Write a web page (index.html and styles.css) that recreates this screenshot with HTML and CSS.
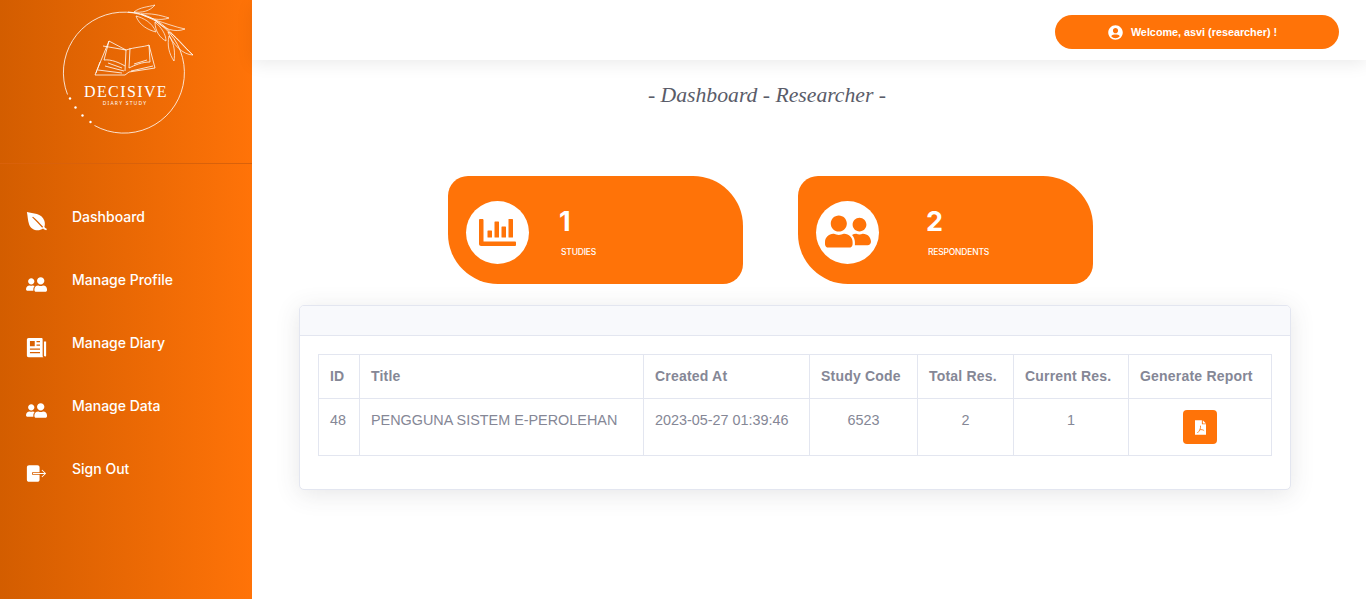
FILE: index.html
```html
<!DOCTYPE html>
<html lang="en">
<head>
    <meta charset="UTF-8">
    <title>Decisive - Dashboard</title>
    <link rel="stylesheet" href="styles.css">
</head>
<body>
    <svg class="icon-defs" width="0" height="0">
        <symbol id="i-friends" viewBox="0 0 640 512"><path d="M192 256c61.9 0 112-50.1 112-112S253.9 32 192 32 80 82.1 80 144s50.1 112 112 112zm76.8 32h-8.3c-20.8 10-43.9 16-68.5 16s-47.6-6-68.5-16h-8.3C51.6 288 0 339.6 0 403.2V432c0 26.5 21.5 48 48 48h288c26.5 0 48-21.5 48-48v-28.8c0-63.6-51.6-115.2-115.2-115.2zM480 256c53 0 96-43 96-96s-43-96-96-96-96 43-96 96 43 96 96 96zm48 32h-3.8c-13.9 4.8-28.6 8-44.2 8s-30.3-3.2-44.2-8H432c-20.4 0-39.2 5.9-55.7 15.4 24.4 26.3 39.7 61.2 39.7 99.8v38.4c0 2.2-.5 4.3-.6 6.4H592c26.5 0 48-21.5 48-48 0-61.9-50.1-112-112-112z"/></symbol>
    </svg>

    <!-- Sidebar -->
    <aside class="sidebar">
        <div class="brand">
            <svg class="logo" viewBox="0 0 252 163">
                <g fill="none" stroke="#fff">
                    <path d="M67.500 94.500A60.500 60.500 0 1 1 94.500 125.500" stroke-width=".8"/>
                    <path d="M128 12C150 13 165 25 174 36C182 44 187 50 193 55" stroke-width=".8"/>
                    <path d="M134 12C140 7 148 7 155 5C150 11 142 13 134 12ZM141 14C150 13 160 15 169 18C160 21 149 19 141 14ZM155 20C165 23 175 27 185 29C175 33 163 29 155 20ZM168 32C175 34 184 47 193 55C183 55 172 44 168 32ZM136 16C143 18 152 22 156 32C148 30 139 25 136 16ZM155 22C161 27 166 34 166 41C160 38 155 31 155 22ZM169 36C175 44 175 54 174 61C169 54 167 45 169 36Z" stroke-width=".7"/>
                    <g stroke-width=".8">
                        <path d="M109 41L126 50C135 47 144 47 149 45L155 68L129 72L125 75L95 75Z"/>
                        <path d="M126 50L125 71M130 48L129 68M109 41L104 60C111 59 120 63 125 66M149 45L150 62C142 62 135 65 129 68M103 46L126 50M100 62L96 73M105 66L124 71M131 71L153 66M98 70L122 73M108 63L122 68M134 64L147 60"/>
                    </g>
                </g>
                <g fill="#fff">
                    <circle cx="70" cy="98.500" r="1.200"/>
                    <circle cx="75.500" cy="107.500" r="1.200"/>
                    <circle cx="82.500" cy="115.500" r="1.200"/>
                    <circle cx="90.500" cy="122" r="1.200"/>
                    <text class="logo-name" x="126" y="97" text-anchor="middle">DECISIVE</text>
                    <text class="logo-sub" x="125" y="105" text-anchor="middle">DIARY STUDY</text>
                </g>
            </svg>
        </div>
        <nav class="menu">
            <a class="menu-item" href="#">
                <svg class="menu-icon" viewBox="0 0 24 24"><path fill-rule="evenodd" d="M1 1C8 3 18 2 21 11C22 14 21.500 17 21 18C21.500 19 22.500 20 24 20.500L23 22C21.500 21.500 20 20.500 19.500 20C14 24 6 22 3.500 15C2 11 2 5 1 1ZM7 7L8 6.500C12 10 16 14 19.500 18L18.500 19C15 15 11 11 7 7Z"/></svg>
                <span>Dashboard</span>
            </a>
            <a class="menu-item" href="#">
                <svg class="menu-icon mirror"><use href="#i-friends"/></svg>
                <span>Manage Profile</span>
            </a>
            <a class="menu-item" href="#">
                <svg class="menu-icon" viewBox="0 0 24 24"><path fill-rule="evenodd" d="M3 1H17.500C18.500 1 19 1.500 19 2.500V21C19 22 19.500 23 20 23H3C1.800 23 1 22.200 1 21V3C1 1.800 1.800 1 3 1ZM4.500 4.500V10.500H10V4.500ZM12 4.500V6H16V4.500ZM12 8.500V10H16V8.500ZM4.500 13V14.500H16V13ZM4.500 17V18.500H16V17Z"/><path d="M20.500 5H23V21C23 22.500 21.500 22.500 20.500 21.500Z"/></svg>
                <span>Manage Diary</span>
            </a>
            <a class="menu-item" href="#">
                <svg class="menu-icon mirror"><use href="#i-friends"/></svg>
                <span>Manage Data</span>
            </a>
            <a class="menu-item" href="#">
                <svg class="menu-icon" viewBox="0 0 24 24"><path d="M3.500 2.500H13C14.500 2.500 15.500 3.500 15.500 5V10.500H7V13.500H15.500V19C15.500 20.500 14.500 21.500 13 21.500H3.500C2 21.500 1 20.500 1 19V5C1 3.500 2 2.500 3.500 2.500Z"/><path d="M8 11.500H21L17.800 8.300L18.500 7.600L23 12L18.500 16.400L17.800 15.700L21 12.500H8Z"/></svg>
                <span>Sign Out</span>
            </a>
        </nav>
    </aside>

    <main class="content">
        <header class="topbar">
            <div class="welcome">
                <svg class="welcome-icon" viewBox="0 0 496 512"><path d="M248 8C111 8 0 119 0 256s111 248 248 248 248-111 248-248S385 8 248 8zm0 96c48.600 0 88 39.400 88 88s-39.400 88-88 88-88-39.400-88-88 39.400-88 88-88zm0 344c-58.700 0-111.300-26.600-146.500-68.200 18.800-35.400 55.600-59.800 98.500-59.800 2.400 0 4.800.4 7.100 1.100 13 4.200 26.600 6.900 40.900 6.900 14.300 0 28-2.700 40.900-6.900 2.300-.7 4.700-1.100 7.100-1.100 42.900 0 79.700 24.400 98.500 59.800C359.300 421.400 306.700 448 248 448z"/></svg>
                <span>Welcome, asvi (researcher) !</span>
            </div>
        </header>

        <h1 class="page-title">- Dashboard - Researcher -</h1>

        <!-- Kartu ringkasan -->
        <section class="stats">
            <div class="stat-card">
                <div class="stat-circle">
                    <svg class="stat-chart" viewBox="0 0 37 27"><path d="M1 0H3.500C4 0 4.500 .5 4.500 1V22.500H36C36.500 22.500 37 23 37 23.500V26C37 26.500 36.500 27 36 27H2C1 27 0 26 0 25V1C0 .5 .5 0 1 0Z"/><rect x="8.500" y="11.500" width="4.500" height="7" rx=".6"/><rect x="15.500" y="2.500" width="4.500" height="16" rx=".6"/><rect x="22.500" y="7.500" width="4.500" height="11" rx=".6"/><rect x="29.500" y="0" width="4.500" height="18.500" rx=".6"/></svg>
                </div>
                <div class="stat-text stat-text-first">
                    <div class="stat-number">1</div>
                    <div class="stat-label">Studies</div>
                </div>
            </div>
            <div class="stat-card">
                <div class="stat-circle">
                    <svg class="stat-people"><use href="#i-friends"/></svg>
                </div>
                <div class="stat-text stat-text-second">
                    <div class="stat-number">2</div>
                    <div class="stat-label">Respondents</div>
                </div>
            </div>
        </section>

        <!-- Tabel studi -->
        <section class="panel">
            <div class="panel-head"></div>
            <div class="panel-body">
                <table class="study-table">
                    <colgroup>
                        <col class="col-id"><col class="col-title"><col class="col-created"><col class="col-code"><col class="col-total"><col class="col-current"><col class="col-report">
                    </colgroup>
                    <thead>
                        <tr>
                            <th>ID</th>
                            <th>Title</th>
                            <th>Created At</th>
                            <th>Study Code</th>
                            <th>Total Res.</th>
                            <th>Current Res.</th>
                            <th>Generate Report</th>
                        </tr>
                    </thead>
                    <tbody>
                        <tr>
                            <td>48</td>
                            <td>PENGGUNA SISTEM E-PEROLEHAN</td>
                            <td>2023-05-27 01:39:46</td>
                            <td class="center">6523</td>
                            <td class="center">2</td>
                            <td class="center">1</td>
                            <td class="center">
                                <a class="pdf-btn" href="#">
                                    <svg viewBox="0 0 12 16"><path fill="#fff" d="M0 0H7.500V4.500H12V16H0Z"/><path fill="#fff" d="M8.500 0L12 3.500H8.500Z"/><path fill="none" stroke="#ff7308" stroke-width=".9" d="M6 6C6.500 9 5 12 2.500 14M5 10.500C7 10 9 10.500 10 11.500"/></svg>
                                </a>
                            </td>
                        </tr>
                    </tbody>
                </table>
            </div>
        </section>
    </main>
</body>
</html>
```

FILE: styles.css
```css
* { box-sizing: border-box; }
body { margin: 0; height: 599px; overflow: hidden; display: flex; background: #fff; font-family: "Liberation Sans", Arial, sans-serif; color: #858796; }
.icon-defs { position: absolute; }

/* Sidebar */
.sidebar { width: 252px; flex-shrink: 0; background: linear-gradient(90deg, #d35d00 0%, #ff7308 100%); }
.brand { height: 164px; border-bottom: 1px solid #d9610a; }
.logo { display: block; width: 252px; height: 163px; }
.logo-name { font-family: "Liberation Serif", serif; font-size: 16px; letter-spacing: 1.4px; }
.logo-sub { font-family: "Noto Sans", sans-serif; font-size: 5px; letter-spacing: 1.2px; }
.menu { padding-top: 22px; display: flex; flex-direction: column; }
.menu-item { height: 63px; display: flex; align-items: flex-start; padding: 0 0 0 26px; color: #fff; text-decoration: none; font-family: "Inter", sans-serif; font-size: 14px; line-height: 18px; font-weight: 500; }
.menu-item span { margin-left: 25px; margin-top: 22px; }
.menu-icon { width: 21px; height: 21px; margin-top: 25px; fill: #fff; flex-shrink: 0; }
.mirror { transform: scaleX(-1); }

/* Main */
.content { flex: 1; min-width: 0; }
.topbar { height: 60px; background: #fff; box-shadow: 0 4px 16px rgba(0, 0, 0, .08); display: flex; justify-content: flex-end; align-items: flex-start; padding: 15px 27px 0 0; position: relative; }
.welcome { width: 284px; height: 34px; border-radius: 17px; background: #ff7308; color: #fff; display: flex; align-items: center; justify-content: center; gap: 8px; font-size: 10.800px; font-weight: 700; padding-right: 9px; }
.welcome-icon { width: 15px; height: 15px; fill: #fff; }
.page-title { margin: 20px 0 0; height: 96px; text-align: center; font-family: "Liberation Serif", serif; font-style: italic; font-weight: 400; font-size: 21.700px; line-height: 30px; color: #5a5c69; padding-right: 84px; }

.stats { display: flex; gap: 55px; padding-left: 196px; }
.stat-card { width: 295px; height: 108px; background: #ff7308; border-radius: 20px 50px 20px 50px; color: #fff; display: flex; align-items: flex-start; padding: 25px 0 0 18px; }
.stat-circle { width: 63px; height: 63px; border-radius: 50%; background: #fff; display: flex; align-items: center; justify-content: center; flex-shrink: 0; }
.stat-chart { width: 37px; height: 27px; fill: #ff7308; }
.stat-people { width: 46px; height: 37px; fill: #ff7308; margin-top: -2px; }
.stat-text { font-family: "Inter", sans-serif; }
.stat-text-first { margin-left: 30px; }
.stat-text-second { margin-left: 47px; }
.stat-number { font-size: 27px; line-height: 32px; font-weight: 700; margin-top: 5px; }
.stat-label { font-size: 8.500px; line-height: 12px; text-transform: uppercase; margin: 8px 0 0 2px; font-weight: 500; letter-spacing: -.2px; }

/* Tabel */
.panel { margin: 21px 75px 0 47px; height: 185px; background: #fff; border: 1px solid #e3e6f0; border-radius: 5px; box-shadow: 0 4px 24px rgba(58, 59, 69, .13); overflow: hidden; }
.panel-head { height: 30px; background: #f8f9fc; border-bottom: 1px solid #e3e6f0; }
.panel-body { padding: 18px 18px 0; }
.study-table { width: 953px; table-layout: fixed; border-collapse: collapse; font-size: 14.400px; color: #858796; }
.study-table th, .study-table td { border: 1px solid #e3e6f0; padding: 0 11px; text-align: left; white-space: nowrap; vertical-align: top; }
.study-table th { height: 44px; line-height: 43px; font-size: 14px; font-weight: 700; letter-spacing: .2px; }
.study-table td { height: 57px; padding-top: 12px; line-height: 18px; }
.study-table td.center { text-align: center; }
.col-id { width: 41px; }
.col-title { width: 284px; }
.col-created { width: 166px; }
.col-code { width: 108px; }
.col-total { width: 96px; }
.col-current { width: 115px; }
.col-report { width: 143px; }
.pdf-btn { width: 34px; height: 34px; margin: -1px auto 0; background: #ff7308; border-radius: 4px; display: flex; align-items: center; justify-content: center; }
.pdf-btn svg { width: 11px; height: 15px; }
```
